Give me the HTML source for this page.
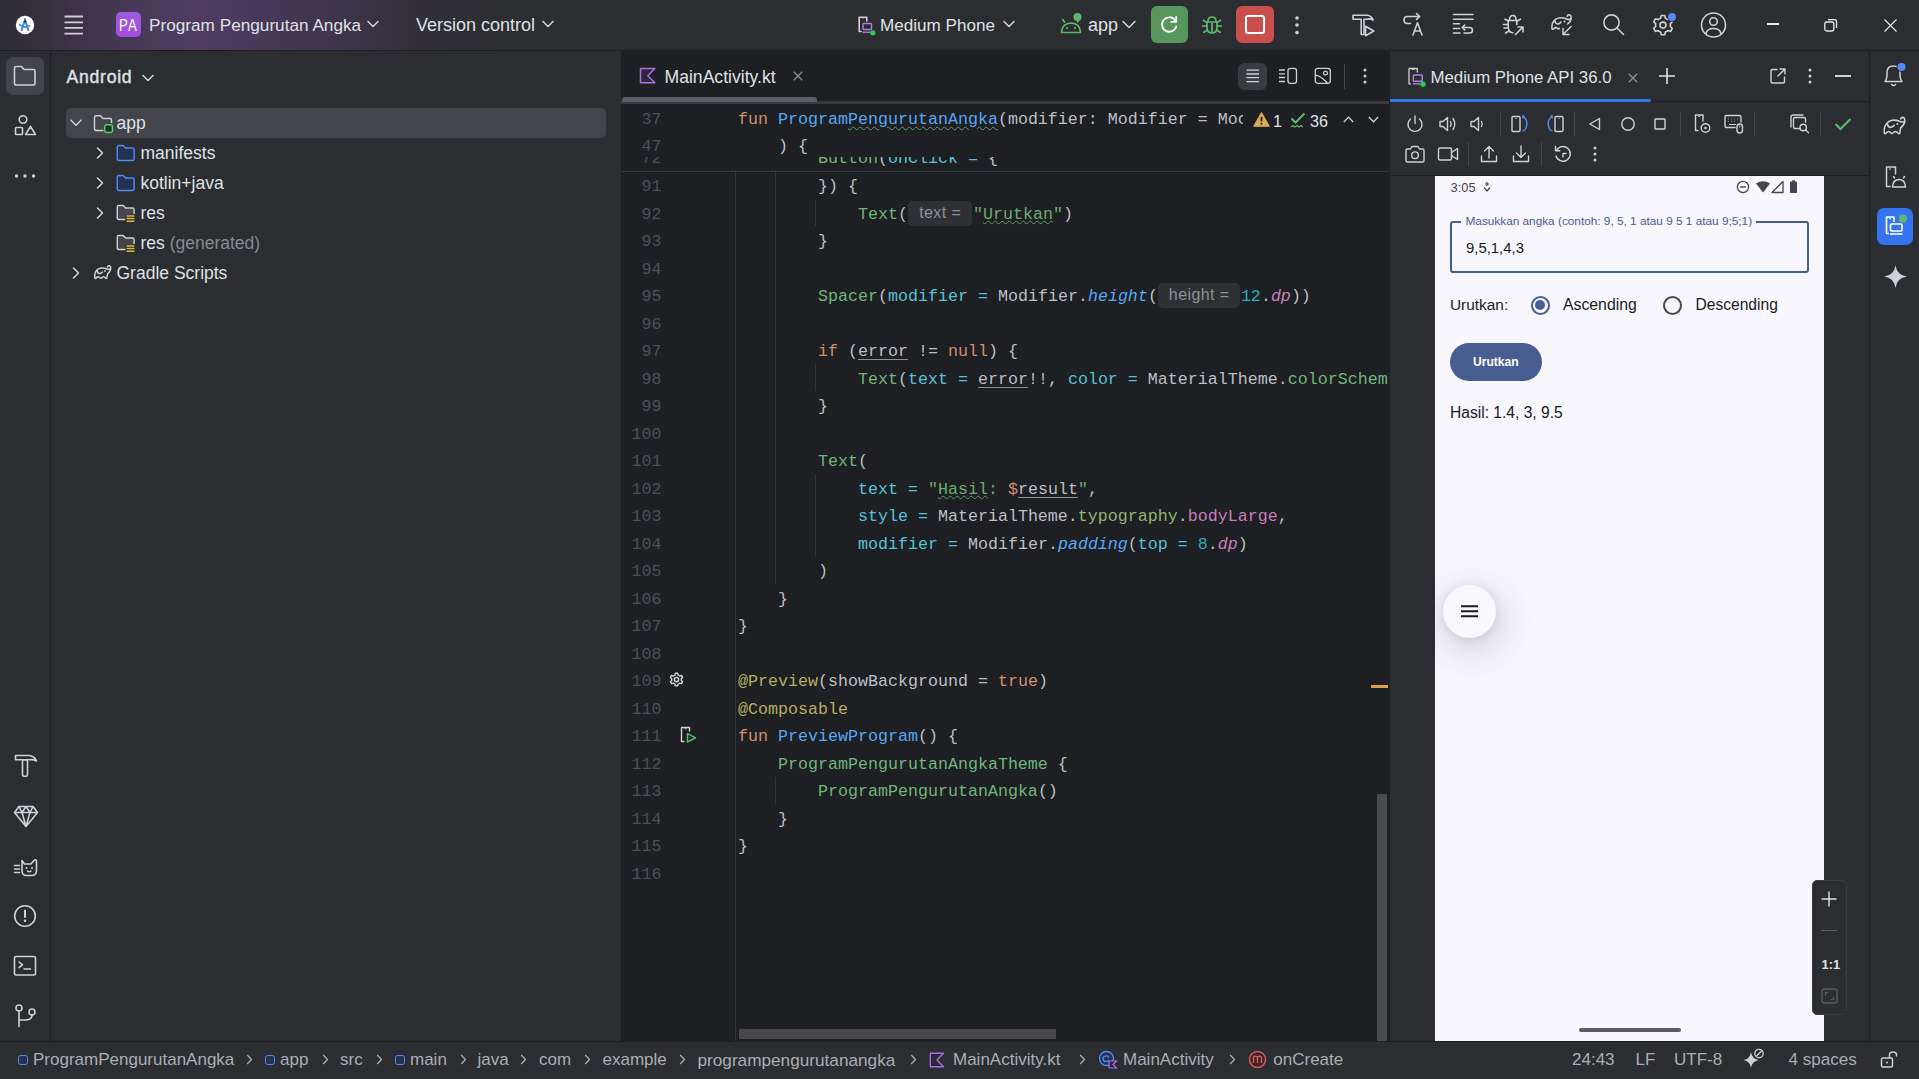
<!DOCTYPE html>
<html><head><meta charset="utf-8">
<style>
*{margin:0;padding:0;box-sizing:border-box}
html,body{width:1919px;height:1079px;overflow:hidden;background:#2B2D30;font-family:"Liberation Sans",sans-serif;color:#DFE1E5}
.a{position:absolute}
svg{position:absolute;overflow:visible}
.ic{fill:none;stroke:#CED0D6;stroke-width:1.6;stroke-linecap:round;stroke-linejoin:round}
#header{left:0;top:0;width:1919px;height:50px;background:#2B2D30}
#hgrad{left:0;top:0;width:620px;height:50px;background:linear-gradient(90deg,#2E2D34 0px,#37313F 50px,#42364F 100px,#4B3B5D 160px,#4D3C60 200px,#48395A 260px,#3F3550 320px,#3A3344 360px,#322F3A 420px,#2D2D32 480px,#2B2D30 540px)}
.hl{position:absolute;height:1px;background:#1E1F22}
.vl{position:absolute;width:1px;background:#1E1F22}
.ht{position:absolute;font-size:17px;color:#DFE1E5;white-space:nowrap;line-height:20px}
.code{font-family:"Liberation Mono",monospace;font-size:16.67px;white-space:pre;line-height:27.5px;color:#BCBEC4}
.ln{position:absolute;font-family:"Liberation Mono",monospace;font-size:16.67px;line-height:27.5px;color:#4B5059;text-align:right;width:60px;left:0}
.hint{display:inline-block;height:25px;line-height:24px;vertical-align:1px;margin:0 1px 0 0.5px;border-radius:5px;background:#2F3034;color:#8C8F94;font-family:"Liberation Sans",sans-serif;font-size:16px;letter-spacing:0.4px;text-align:center;font-style:normal}
.st{position:absolute;font-size:17px;color:#A8ADBD;white-space:nowrap;line-height:20px;top:1049px}
</style></head><body>

<!-- HEADER -->
<div id="header" class="a">
  <div id="hgrad" class="a"></div>
  <!-- AS logo -->
  <svg style="left:15px;top:15px" width="20" height="20" viewBox="0 0 20 20">
    <circle cx="10" cy="10" r="9.2" fill="#FFFFFF"/>
    <path d="M10 5 L6.6 15.2 M10 5 L13.4 15.2" stroke="#3B7BEA" stroke-width="1.9" fill="none" stroke-linecap="round"/>
    <path d="M4.8 9.6 L7.5 11.6 Q10 12.6 12.8 11.2" stroke="#3B7BEA" stroke-width="1.6" fill="none" stroke-linecap="round"/>
    <path d="M10 3.2 V5" stroke="#3B7BEA" stroke-width="1.6"/>
    <circle cx="10" cy="6.3" r="1.2" fill="#2F3540"/>
    <circle cx="14.3" cy="10.8" r="1.1" fill="#4CAF50"/>
  </svg>
  <!-- hamburger -->
  <svg style="left:64px;top:15px" width="20" height="20" viewBox="0 0 20 20">
    <path d="M0.5 1.5H19M0.5 7.3H19M0.5 12.9H19M0.5 18.6H19" stroke="#CED0D6" stroke-width="1.8" fill="none"/>
  </svg>
  <!-- PA badge -->
  <div class="a" style="left:116px;top:12px;width:25px;height:25px;border-radius:5px;background:linear-gradient(200deg,#9A5CE0,#A74CE0);"></div><div class="a" style="left:116px;top:12.5px;width:25px;height:25px;color:#fff;font-size:16.5px;line-height:25px;text-align:center;letter-spacing:1.5px;transform:scaleX(0.8)">PA</div>
  <div class="ht" style="left:149px;top:15px;font-size:17.2px">Program Pengurutan Angka</div>
  <svg style="left:367px;top:20px" width="12" height="8" viewBox="0 0 12 8"><path d="M1 1.5L6 6.5L11 1.5" class="ic" stroke-width="1.5"/></svg>
  <div class="ht" style="left:416px;top:15px;font-size:18px">Version control</div>
  <svg style="left:542px;top:20px" width="12" height="8" viewBox="0 0 12 8"><path d="M1 1.5L6 6.5L11 1.5" class="ic" stroke-width="1.5"/></svg>

  <!-- device selector -->
  <svg style="left:857px;top:16px" width="20" height="20" viewBox="0 0 20 20">
    <path d="M4 15.5H2.2V1.2H9.8V5" class="ic" stroke-width="1.3"/>
    <path d="M5 1.8h2.5" stroke="#CED0D6" stroke-width="1"/>
    <rect x="6" y="7.5" width="8.5" height="6" rx="0.8" fill="none" stroke="#B07FE8" stroke-width="1.4"/>
    <path d="M5.5 16.2H13" stroke="#B07FE8" stroke-width="1.4"/>
    <circle cx="15.8" cy="16.8" r="2.6" fill="#21D14B"/>
  </svg>
  <div class="ht" style="left:880px;top:15.8px;font-size:17.1px">Medium Phone</div>
  <svg style="left:1003px;top:20px" width="12" height="8" viewBox="0 0 12 8"><path d="M1 1.5L6 6.5L11 1.5" class="ic" stroke-width="1.5"/></svg>

  <!-- android app -->
  <svg style="left:1060px;top:12px" width="26" height="24" viewBox="0 0 26 24">
    <path d="M1.5 20.5 Q1.8 11.5 11 11 Q20 11.3 20.5 20.5 Z" fill="none" stroke="#5FB86B" stroke-width="1.7" stroke-linejoin="round"/>
    <path d="M4.5 10L2.8 7.5M17.5 10L19.2 7.5" stroke="#5FB86B" stroke-width="1.6" stroke-linecap="round"/>
    <circle cx="7" cy="16" r="1.1" fill="#5FB86B"/><circle cx="15" cy="16" r="1.1" fill="#5FB86B"/>
    <circle cx="17.5" cy="5" r="4" fill="#5FB86B"/>
  </svg>
  <div class="ht" style="left:1088px;top:14.8px;font-size:18px">app</div>
  <svg style="left:1122px;top:20px" width="14" height="9" viewBox="0 0 14 9"><path d="M1 1.5L7 7.5L13 1.5" class="ic" stroke-width="1.6"/></svg>

  <!-- green rerun -->
  <div class="a" style="left:1151px;top:6px;width:37px;height:37px;border-radius:6px;background:#57965C"></div>
  <svg style="left:1159px;top:14px" width="21" height="21" viewBox="0 0 21 21">
    <path d="M16.8 7.5 A7.2 7.2 0 1 0 17.2 12.5" fill="none" stroke="#fff" stroke-width="1.8" stroke-linecap="round"/>
    <path d="M17.2 2.8V7.8H12.2" fill="none" stroke="#fff" stroke-width="1.8" stroke-linecap="round" stroke-linejoin="round"/>
  </svg>
  <!-- debug bug -->
  <svg style="left:1200px;top:13px" width="24" height="24" viewBox="0 0 24 24">
    <path d="M8 8.5 Q8 4 12 4 Q16 4 16 8.5" fill="none" stroke="#5FB86B" stroke-width="1.7"/>
    <path d="M7 9 H17 V14.5 Q17 20 12 20 Q7 20 7 14.5 Z" fill="none" stroke="#5FB86B" stroke-width="1.7" stroke-linejoin="round"/>
    <path d="M12 9.5V19.5M7 13H2.5M17 13H21.5M7.3 9.5L3.5 7.5M16.7 9.5L20.5 7.5M7.5 17L3.8 19.2M16.5 17L20.2 19.2" stroke="#5FB86B" stroke-width="1.7" stroke-linecap="round"/>
  </svg>
  <!-- red stop -->
  <div class="a" style="left:1236px;top:6px;width:38px;height:37px;border-radius:6px;background:#C94F4F"></div>
  <div class="a" style="left:1245px;top:15px;width:20px;height:19px;border:2px solid #fff;border-radius:3px"></div>
  <!-- kebab -->
  <svg style="left:1293px;top:15px" width="8" height="20" viewBox="0 0 8 20">
    <circle cx="4" cy="3" r="1.8" fill="#CED0D6"/><circle cx="4" cy="10" r="1.8" fill="#CED0D6"/><circle cx="4" cy="17.6" r="1.8" fill="#CED0D6"/>
  </svg>

  <!-- hammer play -->
  <svg style="left:1351px;top:12px" width="26" height="26" viewBox="0 0 26 26">
    <path d="M2 3.2H16 Q20.5 3.5 22.2 8 Q19.5 6.3 16 7.2 H13 V22.5 H10.2 V7.2 H2 Z" class="ic" stroke-width="1.5"/>
    <path d="M14.6 14.2 V23.8 L22.8 19 Z" class="ic" stroke-width="1.5"/>
  </svg>
  <!-- arrow A -->
  <svg style="left:1402px;top:12px" width="25" height="25" viewBox="0 0 25 25">
    <path d="M8.5 11.5 H5.5 Q2 11.5 2 8 Q2 4.5 5.5 4.5 H17.5" class="ic" stroke-width="1.5"/>
    <path d="M14.5 1.5 L17.5 4.5 L14.5 7.5" class="ic" stroke-width="1.5"/>
    <path d="M11 23 L15.5 10.8 L20 23 M12.5 19 H18.5" class="ic" stroke-width="1.5"/>
  </svg>
  <!-- lines undo -->
  <svg style="left:1451px;top:12px" width="25" height="25" viewBox="0 0 25 25">
    <path d="M2.5 2.5H22M2.5 7.2H22M2.5 11.8H8.5M2.5 16.5H8.5M2.5 21H9" class="ic" stroke-width="1.5"/>
    <path d="M13 21 H18.5 Q21.5 21 21.5 18.2 Q21.5 15.5 18.5 15.5 H11.5 M13.8 13 L11.2 15.5 L13.8 18" class="ic" stroke-width="1.5"/>
  </svg>
  <!-- bug arrow -->
  <svg style="left:1501px;top:12px" width="25" height="25" viewBox="0 0 25 25">
    <path d="M8.5 8 Q8.5 3.5 11.8 3.5 Q15 3.5 15 8" class="ic" stroke-width="1.5"/>
    <path d="M15.8 12.5 V8.5 H7.2 V14.5 Q7.2 20.5 11.8 20.8" class="ic" stroke-width="1.5"/>
    <path d="M7 12.5H2.5M7 16H3M7.5 9L4 7.2M16 9L19.5 7.2M8 19L4.5 21" class="ic" stroke-width="1.5"/>
    <path d="M14.5 22.5 L22 15 M17 15 H22 V20" class="ic" stroke-width="1.5"/>
  </svg>
  <!-- elephant arrow -->
  <svg style="left:1550px;top:12px" width="27" height="24" viewBox="0 0 27 24">
    <path d="M2 17 Q1.2 10.5 5.8 7.2 Q10.5 4.5 16.5 7 Q19.5 8.2 21 6.2 Q21.5 3 19 2.8 Q17.5 2.8 17.2 4.3 M21.2 6.2 Q21 9.5 17.5 12 M9.5 16.2 Q8.5 17.8 7.3 16.3 Q5.8 14.8 4 16.6 Q3 17.8 2 17 M4.8 8.8 Q6 12.5 8.2 12 Q10 11.5 11 10" fill="none" stroke="#CED0D6" stroke-width="1.5" stroke-linecap="round" stroke-linejoin="round"/>
    <circle cx="14.5" cy="9.5" r="1" fill="#CED0D6"/>
    <path d="M13 22.5 L21 14.5 M13 16.5 V22.5 H19" fill="none" stroke="#CED0D6" stroke-width="1.5" stroke-linecap="round" stroke-linejoin="round"/>
  </svg>
  <!-- search -->
  <svg style="left:1602px;top:13px" width="24" height="24" viewBox="0 0 24 24">
    <circle cx="9.5" cy="9.5" r="7.6" class="ic" stroke-width="1.6"/>
    <path d="M15 15L21.5 21.5" class="ic" stroke-width="1.6"/>
  </svg>
  <!-- gear -->
  <svg style="left:1651px;top:13px" width="26" height="26" viewBox="0 0 26 26">
    <path d="M10.3 2.5 H13.7 L14.4 5.2 Q15.8 5.7 16.9 6.6 L19.6 5.8 L21.3 8.8 L19.3 10.7 Q19.6 12.1 19.3 13.5 L21.3 15.4 L19.6 18.4 L16.9 17.6 Q15.8 18.5 14.4 19 L13.7 21.7 H10.3 L9.6 19 Q8.2 18.5 7.1 17.6 L4.4 18.4 L2.7 15.4 L4.7 13.5 Q4.4 12.1 4.7 10.7 L2.7 8.8 L4.4 5.8 L7.1 6.6 Q8.2 5.7 9.6 5.2 Z" class="ic" stroke-width="1.5"/>
    <circle cx="12" cy="12.1" r="3" class="ic" stroke-width="1.5"/>
    <circle cx="21" cy="4" r="4.8" fill="#2B2D30"/>
    <circle cx="21" cy="4" r="4" fill="#548AF7"/>
  </svg>
  <!-- account -->
  <svg style="left:1700px;top:11px" width="28" height="28" viewBox="0 0 28 28">
    <circle cx="13.5" cy="14" r="12" class="ic" stroke-width="1.5"/>
    <circle cx="13.5" cy="10.5" r="3.8" class="ic" stroke-width="1.5"/>
    <path d="M6 22.5 Q7 17.5 13.5 17.5 Q20 17.5 21 22.5" class="ic" stroke-width="1.5"/>
  </svg>
  <!-- window controls -->
  <div class="a" style="left:1767px;top:23px;width:12px;height:1.5px;background:#E8E8E8"></div>
  <svg style="left:1824px;top:18px" width="14" height="14" viewBox="0 0 14 14">
    <rect x="0.8" y="4" width="9" height="9" rx="2" fill="none" stroke="#E8E8E8" stroke-width="1.3"/>
    <path d="M4 1.6 H10.5 Q12.5 1.6 12.5 3.6 V10" fill="none" stroke="#E8E8E8" stroke-width="1.3"/>
  </svg>
  <svg style="left:1884px;top:19px" width="13" height="13" viewBox="0 0 13 13">
    <path d="M0.5 0.5L12.5 12.5M12.5 0.5L0.5 12.5" stroke="#E8E8E8" stroke-width="1.2"/>
  </svg>
</div>
<div class="hl" style="left:0;top:50px;width:1919px"></div>

<!-- LEFT STRIP -->
<div class="vl" style="left:50px;top:51px;height:990px"></div>

<!-- PROJECT PANEL -->
<div id="project" class="a" style="left:51px;top:51px;width:570px;height:990px;background:#2B2D30"></div>
<div class="ht" style="left:66.5px;top:66.90px;font-size:17.6px;color:#DFE1E5;-webkit-text-stroke:0.45px #DFE1E5;letter-spacing:0.75px">Android</div>
<svg style="left:142px;top:74px" width="12" height="8" viewBox="0 0 12 8"><path d="M1 1.5L6 6.5L11 1.5" class="ic" stroke-width="1.5"/></svg>
<div class="a" style="left:66px;top:108px;width:540px;height:30px;border-radius:5px;background:#43454A"></div>
<svg style="left:70px;top:119px" width="12" height="8" viewBox="0 0 12 8"><path d="M1 1.2L6 6.2L11 1.2" class="ic" stroke-width="1.4"/></svg>
<svg style="left:93px;top:114px" width="22" height="20" viewBox="0 0 22 20">
 <path d="M10.5 16.5 H3 Q1.5 16.5 1.5 15 V3 Q1.5 1.8 3 1.8 H7.5 L10 4.5 H17 Q18.5 4.5 18.5 6 V9" fill="none" stroke="#CED0D6" stroke-width="1.4"/>
 <rect x="11.8" y="10.8" width="7.6" height="7.6" rx="2" fill="#1F3326" stroke="#4FD16A" stroke-width="1.5"/>
</svg>
<div class="ht" style="left:116.5px;top:112.94px;font-size:17.5px;color:#DFE1E5;">app</div>
<svg style="left:96px;top:147px" width="8" height="12" viewBox="0 0 8 12"><path d="M1.5 1L6.5 6L1.5 11" class="ic" stroke-width="1.4"/></svg>
<svg style="left:116px;top:144px" width="20" height="18" viewBox="0 0 20 18"><path d="M1.3 3 Q1.3 1.5 2.8 1.5 H7.2 L9.6 4 H16.6 Q18.1 4 18.1 5.5 V15 Q18.1 16.5 16.6 16.5 H2.8 Q1.3 16.5 1.3 15 Z" fill="#233252" stroke="#548AF7" stroke-width="1.4"/></svg>
<div class="ht" style="left:140.5px;top:142.94px;font-size:17.5px;color:#DFE1E5;">manifests</div>
<svg style="left:96px;top:177px" width="8" height="12" viewBox="0 0 8 12"><path d="M1.5 1L6.5 6L1.5 11" class="ic" stroke-width="1.4"/></svg>
<svg style="left:116px;top:174px" width="20" height="18" viewBox="0 0 20 18"><path d="M1.3 3 Q1.3 1.5 2.8 1.5 H7.2 L9.6 4 H16.6 Q18.1 4 18.1 5.5 V15 Q18.1 16.5 16.6 16.5 H2.8 Q1.3 16.5 1.3 15 Z" fill="#233252" stroke="#548AF7" stroke-width="1.4"/></svg>
<div class="ht" style="left:140.5px;top:172.94px;font-size:17.5px;color:#DFE1E5;">kotlin+java</div>
<svg style="left:96px;top:207px" width="8" height="12" viewBox="0 0 8 12"><path d="M1.5 1L6.5 6L1.5 11" class="ic" stroke-width="1.4"/></svg>
<svg style="left:116px;top:204px" width="21" height="19" viewBox="0 0 21 19"><path d="M9.5 15.5 H2.8 Q1.3 15.5 1.3 14 V2.8 Q1.3 1.5 2.8 1.5 H7.2 L9.6 4 H16.6 Q18.1 4 18.1 5.5 V10" fill="#43454A" stroke="#CED0D6" stroke-width="1.4"/><rect x="9.6" y="10.6" width="9.4" height="7.4" fill="#2B2D30"/><path d="M10.6 12H18.4M10.6 14.6H18.4M10.6 17.2H18.4" stroke="#E0B643" stroke-width="1.5"/></svg>
<div class="ht" style="left:140.5px;top:202.94px;font-size:17.5px;color:#DFE1E5;">res</div>
<svg style="left:116px;top:234px" width="21" height="19" viewBox="0 0 21 19"><path d="M9.5 15.5 H2.8 Q1.3 15.5 1.3 14 V2.8 Q1.3 1.5 2.8 1.5 H7.2 L9.6 4 H16.6 Q18.1 4 18.1 5.5 V10" fill="#43454A" stroke="#CED0D6" stroke-width="1.4"/><rect x="9.6" y="10.6" width="9.4" height="7.4" fill="#2B2D30"/><path d="M10.6 12H18.4M10.6 14.6H18.4M10.6 17.2H18.4" stroke="#E0B643" stroke-width="1.5"/></svg>
<div class="ht" style="left:140.5px;top:232.94px;font-size:17.5px;color:#DFE1E5;">res <span style="color:#868A91">(generated)</span></div>
<svg style="left:72px;top:267px" width="8" height="12" viewBox="0 0 8 12"><path d="M1.5 1L6.5 6L1.5 11" class="ic" stroke-width="1.4"/></svg>
<svg style="left:93px;top:264px" width="21" height="17" viewBox="0 0 21 17">
 <path d="M1.8 14 Q1 8 5 5.2 Q9 2.8 14 5 Q16.5 6 17.6 4.5 Q18 2 16 1.8 Q14.8 1.8 14.5 3 M17.8 4.5 Q17.5 7.5 14.5 10 L13.8 14.2 Q12.8 15 12 13.5 Q10.5 12 9 13.5 Q8 15 6.5 13.5 Q5 12 3.5 13.8 Q2.5 15 1.8 14 M4 6.5 Q5 10 7 9.5 Q8.5 9 9.5 8" fill="none" stroke="#CED0D6" stroke-width="1.5" stroke-linecap="round" stroke-linejoin="round"/>
 <circle cx="12" cy="7" r="0.9" fill="#CED0D6"/>
</svg>
<div class="ht" style="left:116.5px;top:262.94px;font-size:17.5px;color:#DFE1E5;">Gradle Scripts</div>
<!-- left strip icons -->
<div class="a" style="left:6px;top:57px;width:38px;height:38px;border-radius:7px;background:#43454A"></div>
<svg style="left:13px;top:65px" width="24" height="22" viewBox="0 0 24 22">
  <path d="M1.5 3 Q1.5 1.5 3 1.5 H8.5 L11 4.5 H20.5 Q22 4.5 22 6 V18.5 Q22 20 20.5 20 H3 Q1.5 20 1.5 18.5 Z" class="ic" stroke-width="1.7"/>
</svg>
<svg style="left:14px;top:114px" width="24" height="24" viewBox="0 0 24 24">
  <circle cx="9" cy="5.5" r="3.8" class="ic" stroke-width="1.6"/>
  <rect x="1.5" y="13.5" width="7" height="7" rx="0.8" class="ic" stroke-width="1.6"/>
  <path d="M16.5 12.5 L21.5 20.5 H11.5 Z" class="ic" stroke-width="1.6"/>
</svg>
<svg style="left:14px;top:172px" width="24" height="8" viewBox="0 0 24 8">
  <circle cx="2.5" cy="4" r="1.7" fill="#CED0D6"/><circle cx="11" cy="4" r="1.7" fill="#CED0D6"/><circle cx="19.5" cy="4" r="1.7" fill="#CED0D6"/>
</svg>
<!-- hammer -->
<svg style="left:13px;top:753px" width="26" height="26" viewBox="0 0 26 26">
  <path d="M2.5 2.5 H16 Q21.5 3 23.5 8 Q20 6.2 16.5 6.8 H2.5 Z" class="ic" stroke-width="1.6"/>
  <rect x="9.5" y="6.8" width="5" height="16.5" rx="1.5" class="ic" stroke-width="1.6"/>
</svg>
<!-- gem -->
<svg style="left:13px;top:805px" width="26" height="23" viewBox="0 0 26 23">
  <path d="M6 1.5 H20 L24.5 7.5 L13 21.5 L1.5 7.5 Z M1.5 7.5 H24.5 M6 1.5 L9 7.5 L13 21.5 L17 7.5 L20 1.5 M9 7.5 L13 1.5 L17 7.5" class="ic" stroke-width="1.5"/>
</svg>
<!-- cat -->
<svg style="left:13px;top:856px" width="26" height="22" viewBox="0 0 26 22">
  <path d="M9 4.5 L11.5 8 H18 L21.5 4 Q24 3.5 23.5 6 V14.5 Q23.5 19.5 18.5 19.5 H13.5 Q9 19.5 9 14.5 Z" class="ic" stroke-width="1.6"/>
  <path d="M1.5 9.5 H6.5 M1.5 13 H6.5 M1.5 16.5 H6.5" class="ic" stroke-width="1.6"/>
  <circle cx="13.5" cy="12" r="1" fill="#CED0D6"/><circle cx="19" cy="12" r="1" fill="#CED0D6"/>
  <path d="M14.5 15 Q16.2 16.5 18 15" class="ic" stroke-width="1.3"/>
</svg>
<!-- alert -->
<svg style="left:13px;top:904px" width="24" height="24" viewBox="0 0 24 24">
  <circle cx="12" cy="12" r="10.3" class="ic" stroke-width="1.7"/>
  <path d="M12 6.5 V13" stroke="#CED0D6" stroke-width="2" stroke-linecap="round"/>
  <circle cx="12" cy="16.8" r="1.3" fill="#CED0D6"/>
</svg>
<!-- terminal -->
<svg style="left:13px;top:955px" width="24" height="22" viewBox="0 0 24 22">
  <rect x="1.5" y="1.5" width="21" height="18.5" rx="1.5" class="ic" stroke-width="1.6"/>
  <path d="M6 7 L9.5 9.8 L6 12.6 M11 14 H17.5" class="ic" stroke-width="1.6"/>
</svg>
<!-- git -->
<svg style="left:14px;top:1004px" width="24" height="24" viewBox="0 0 24 24">
  <circle cx="5" cy="4" r="3" class="ic" stroke-width="1.6"/>
  <circle cx="18" cy="8" r="3" class="ic" stroke-width="1.6"/>
  <path d="M5 7 V22.5 M18 11 Q18 16 11 16 H5" class="ic" stroke-width="1.6"/>
</svg>

<!-- EDITOR -->
<!--EDSTART-->
<div id="editor" class="a" style="left:621px;top:51px;width:768px;height:990px;background:#1E1F22;overflow:hidden"></div>
<svg style="left:639px;top:67px" width="18" height="18" viewBox="0 0 18 18">
 <path d="M1.5 1.5 H15.8 L8.8 8.8 L15.8 15.8 H1.5 Z" fill="#2E2638" stroke="#A571E6" stroke-width="1.5" stroke-linejoin="round"/>
</svg>
<div class="ht" style="left:664.5px;top:67px;font-size:17.6px;color:#DFE1E5">MainActivity.kt</div>
<svg style="left:793px;top:71px" width="10" height="10" viewBox="0 0 10 10"><path d="M0.8 0.8L9.2 9.2M9.2 0.8L0.8 9.2" stroke="#8C8F94" stroke-width="1.3"/></svg>
<div class="a" style="left:621px;top:101px;width:768px;height:3px;background:#393B40"></div>
<div class="a" style="left:622px;top:97px;width:195px;height:5px;border-radius:3px 3px 0 0;background:#5A5D63"></div>
<div class="a" style="left:1238px;top:62.5px;width:29px;height:27px;border-radius:6px;background:#393B40"></div>
<svg style="left:1246px;top:69px" width="14" height="14" viewBox="0 0 14 14"><path d="M0.5 1.2H13M0.5 5H13M0.5 8.7H13M0.5 12.6H13" stroke="#CED0D6" stroke-width="1.3"/></svg>
<svg style="left:1278px;top:67px" width="20" height="18" viewBox="0 0 20 18"><path d="M1 3H7M1 6.8H7M1 10.5H7M1 14.5H7" stroke="#CED0D6" stroke-width="1.3"/><rect x="10" y="1.3" width="8.5" height="15" rx="2.3" fill="none" stroke="#CED0D6" stroke-width="1.3"/></svg>
<svg style="left:1314px;top:67px" width="18" height="18" viewBox="0 0 18 18"><rect x="1.3" y="1.3" width="15" height="15" rx="2.5" fill="none" stroke="#CED0D6" stroke-width="1.3"/><circle cx="11.5" cy="6" r="1.9" fill="none" stroke="#CED0D6" stroke-width="1.2"/><path d="M1.5 8.5 Q5 7.5 13.5 16" fill="none" stroke="#CED0D6" stroke-width="1.3"/></svg>
<div class="a" style="left:1344px;top:64px;width:1px;height:25px;background:#43454A"></div>
<svg style="left:1361px;top:67px" width="8" height="18" viewBox="0 0 8 18"><circle cx="4" cy="3" r="1.5" fill="#CED0D6"/><circle cx="4" cy="9" r="1.5" fill="#CED0D6"/><circle cx="4" cy="15" r="1.5" fill="#CED0D6"/></svg>
<div class="ln" style="left:601.5px;top:173.00px">91</div>
<div class="a code" style="left:738px;top:173.00px">        }) {</div>
<div class="ln" style="left:601.5px;top:200.50px">92</div>
<div class="a code" style="left:738px;top:200.50px">            <span style="color:#6FB57D;">Text</span>(<span class="hint" style="width:63.5px">text =</span><span style="color:#6AAB73;">"</span><span style="color:#6AAB73;text-decoration:underline wavy #5E9A68;text-underline-offset:1px;text-decoration-thickness:1px;">Urutkan</span><span style="color:#6AAB73;">"</span>)</div>
<div class="ln" style="left:601.5px;top:228.00px">93</div>
<div class="a code" style="left:738px;top:228.00px">        }</div>
<div class="ln" style="left:601.5px;top:255.50px">94</div>
<div class="ln" style="left:601.5px;top:283.00px">95</div>
<div class="a code" style="left:738px;top:283.00px">        <span style="color:#6FB57D;">Spacer</span>(<span style="color:#56C1D6;">modifier =</span> Modifier.<span style="color:#56A8F5;font-style:italic;">height</span>(<span class="hint" style="width:81.5px">height =</span><span style="color:#2AACB8;">12</span>.<span style="color:#C77DBB;font-style:italic;">dp</span>))</div>
<div class="ln" style="left:601.5px;top:310.50px">96</div>
<div class="ln" style="left:601.5px;top:338.00px">97</div>
<div class="a code" style="left:738px;top:338.00px">        <span style="color:#CF8E6D;">if</span> (<span style="text-decoration:underline;text-underline-offset:3px;text-decoration-thickness:1px;text-decoration-color:#8C8F94">error</span> != <span style="color:#CF8E6D;">null</span>) {</div>
<div class="ln" style="left:601.5px;top:365.50px">98</div>
<div class="a code" style="left:738px;top:365.50px">            <span style="color:#6FB57D;">Text</span>(<span style="color:#56C1D6;">text =</span> <span style="text-decoration:underline;text-underline-offset:3px;text-decoration-thickness:1px;text-decoration-color:#8C8F94">error</span>!!, <span style="color:#56C1D6;">color =</span> MaterialTheme.<span style="color:#6FB57D">colorSchem</span></div>
<div class="ln" style="left:601.5px;top:393.00px">99</div>
<div class="a code" style="left:738px;top:393.00px">        }</div>
<div class="ln" style="left:601.5px;top:420.50px">100</div>
<div class="ln" style="left:601.5px;top:448.00px">101</div>
<div class="a code" style="left:738px;top:448.00px">        <span style="color:#6FB57D;">Text</span>(</div>
<div class="ln" style="left:601.5px;top:475.50px">102</div>
<div class="a code" style="left:738px;top:475.50px">            <span style="color:#56C1D6;">text =</span> <span style="color:#6AAB73;">"</span><span style="color:#6AAB73;text-decoration:underline wavy #5E9A68;text-underline-offset:1px;text-decoration-thickness:1px;">Hasil</span><span style="color:#6AAB73;">: </span><span style="color:#CF8E6D;">$</span><span style="text-decoration:underline;text-underline-offset:3px;text-decoration-thickness:1px;text-decoration-color:#8C8F94">result</span><span style="color:#6AAB73;">"</span>,</div>
<div class="ln" style="left:601.5px;top:503.00px">103</div>
<div class="a code" style="left:738px;top:503.00px">            <span style="color:#56C1D6;">style =</span> MaterialTheme.<span style="color:#8FB573">typography</span>.<span style="color:#C77DBB">bodyLarge</span>,</div>
<div class="ln" style="left:601.5px;top:530.50px">104</div>
<div class="a code" style="left:738px;top:530.50px">            <span style="color:#56C1D6;">modifier =</span> Modifier.<span style="color:#56A8F5;font-style:italic;">padding</span>(<span style="color:#56C1D6;">top =</span> <span style="color:#2AACB8;">8</span>.<span style="color:#C77DBB;font-style:italic;">dp</span>)</div>
<div class="ln" style="left:601.5px;top:558.00px">105</div>
<div class="a code" style="left:738px;top:558.00px">        )</div>
<div class="ln" style="left:601.5px;top:585.50px">106</div>
<div class="a code" style="left:738px;top:585.50px">    }</div>
<div class="ln" style="left:601.5px;top:613.00px">107</div>
<div class="a code" style="left:738px;top:613.00px">}</div>
<div class="ln" style="left:601.5px;top:640.50px">108</div>
<div class="ln" style="left:601.5px;top:668.00px">109</div>
<div class="a code" style="left:738px;top:668.00px"><span style="color:#B3AE60;">@Preview</span>(showBackground = <span style="color:#CF8E6D;">true</span>)</div>
<div class="ln" style="left:601.5px;top:695.50px">110</div>
<div class="a code" style="left:738px;top:695.50px"><span style="color:#B3AE60;">@Composable</span></div>
<div class="ln" style="left:601.5px;top:723.00px">111</div>
<div class="a code" style="left:738px;top:723.00px"><span style="color:#CF8E6D;">fun </span><span style="color:#56A8F5;">PreviewProgram</span>() {</div>
<div class="ln" style="left:601.5px;top:750.50px">112</div>
<div class="a code" style="left:738px;top:750.50px">    <span style="color:#6FB57D;">ProgramPengurutanAngkaTheme</span> {</div>
<div class="ln" style="left:601.5px;top:778.00px">113</div>
<div class="a code" style="left:738px;top:778.00px">        <span style="color:#6FB57D;">ProgramPengurutanAngka</span>()</div>
<div class="ln" style="left:601.5px;top:805.50px">114</div>
<div class="a code" style="left:738px;top:805.50px">    }</div>
<div class="ln" style="left:601.5px;top:833.00px">115</div>
<div class="a code" style="left:738px;top:833.00px">}</div>
<div class="ln" style="left:601.5px;top:860.50px">116</div>
<div class="a" style="left:735px;top:172px;width:1px;height:869px;background:#313338"></div>
<div class="a" style="left:775px;top:172px;width:1px;height:412px;background:#313338"></div>
<div class="a" style="left:775px;top:777px;width:1px;height:27px;background:#313338"></div>
<div class="a" style="left:815px;top:200px;width:1px;height:26px;background:#313338"></div>
<div class="a" style="left:815px;top:364px;width:1px;height:27px;background:#313338"></div>
<div class="a" style="left:815px;top:474px;width:1px;height:82px;background:#313338"></div>
<svg style="left:668px;top:671px" width="17" height="17" viewBox="0 0 26 26">
 <path d="M10.3 2.5 H13.7 L14.4 5.2 Q15.8 5.7 16.9 6.6 L19.6 5.8 L21.3 8.8 L19.3 10.7 Q19.6 12.1 19.3 13.5 L21.3 15.4 L19.6 18.4 L16.9 17.6 Q15.8 18.5 14.4 19 L13.7 21.7 H10.3 L9.6 19 Q8.2 18.5 7.1 17.6 L4.4 18.4 L2.7 15.4 L4.7 13.5 Q4.4 12.1 4.7 10.7 L2.7 8.8 L4.4 5.8 L7.1 6.6 Q8.2 5.7 9.6 5.2 Z" fill="none" stroke="#CED0D6" stroke-width="2.2" stroke-linejoin="round" transform="translate(1 1)"/>
 <circle cx="13" cy="13.1" r="3.3" fill="none" stroke="#CED0D6" stroke-width="2.2"/>
</svg>
<svg style="left:680px;top:726px" width="18" height="18" viewBox="0 0 18 18">
 <path d="M4.5 15.5 H1.5 V1.5 H9.5 V5.5" fill="none" stroke="#CED0D6" stroke-width="1.4" stroke-linejoin="round"/>
 <path d="M4.5 2.8H6.5" stroke="#CED0D6" stroke-width="1"/>
 <path d="M7.5 7.5 L15.5 11.8 L7.5 16.2 Z" fill="#1F3326" stroke="#5FB86B" stroke-width="1.4" stroke-linejoin="round"/>
</svg>
<div class="a" style="left:622px;top:104px;width:767px;height:68px;background:#1E1F22;overflow:hidden">
<div class="ln" style="left:-20.5px;top:1.60px">37</div>
<div class="a code" style="left:116px;top:1.6px"><span style="color:#CF8E6D">fun </span><span style="color:#56A8F5">Program<span style="text-decoration:underline wavy #5E9A68;text-underline-offset:2px;text-decoration-thickness:1px">PengurutanAngka</span></span>(modifier: Modifier = Moc</div>
<div class="ln" style="left:-20.5px;top:28.60px">47</div>
<div class="a code" style="left:116px;top:28.6px">    ) {</div>
<div class="a" style="left:0;top:52.5px;width:767px;height:14.5px;overflow:hidden">
<div class="ln" style="left:-20.5px;top:-11.5px">72</div>
<div class="a code" style="left:116px;top:-11.5px">        <span style="color:#6FB57D">Button</span>(<span style="color:#56C1D6">onClick =</span> {</div>
</div>
<div class="a" style="left:0;top:67px;width:767px;height:1px;background:#393B40"></div>
<div class="a" style="left:621px;top:0;width:146px;height:27px;background:#1E1F22"></div>
<svg style="left:631px;top:8px" width="17" height="15" viewBox="0 0 17 15"><path d="M8.5 0.8 L16.2 14.2 H0.8 Z" fill="#D9A94F" stroke="#D9A94F" stroke-width="1.2" stroke-linejoin="round"/><path d="M8.5 5V9.5" stroke="#1E1F22" stroke-width="1.8"/><circle cx="8.5" cy="11.8" r="1" fill="#1E1F22"/></svg>
<div class="ht" style="left:651px;top:6.5px;font-size:16.2px;color:#DFE1E5">1</div>
<svg style="left:668px;top:8px" width="16" height="17" viewBox="0 0 16 17"><path d="M1.5 6.5 L5.5 10.5 L14.5 1.5" fill="none" stroke="#5FB86B" stroke-width="2"/><path d="M1 15 L3 13.5 L5 15 L7 13.5 L9 15 L11 13.5 L13 15" fill="none" stroke="#5FB86B" stroke-width="1.1"/></svg>
<div class="ht" style="left:688px;top:6.5px;font-size:16.2px;color:#DFE1E5">36</div>
<svg style="left:721px;top:12px" width="11" height="7" viewBox="0 0 11 7"><path d="M0.8 6L5.5 1.2L10.2 6" fill="none" stroke="#CED0D6" stroke-width="1.3"/></svg>
<svg style="left:746px;top:12px" width="11" height="7" viewBox="0 0 11 7"><path d="M0.8 1L5.5 5.8L10.2 1" fill="none" stroke="#CED0D6" stroke-width="1.3"/></svg>
</div>
<div class="a" style="left:1371px;top:685px;width:17px;height:3px;background:#D9A343"></div>
<div class="a" style="left:1376px;top:793px;width:12px;height:248px;background:#1E1F22"></div>
<div class="a" style="left:1377px;top:794px;width:10px;height:247px;background:#4A4B4E"></div>
<div class="a" style="left:739px;top:1029px;width:317px;height:10px;background:#48484B"></div>
<!--EDEND-->
<div class="vl" style="left:1389px;top:51px;height:990px"></div>

<!-- DEVICES -->
<!--DEVSTART-->
<div id="devices" class="a" style="left:1390px;top:51px;width:479px;height:990px;background:#2B2D30;overflow:hidden"></div>
<svg style="left:1407px;top:67px" width="20" height="20" viewBox="0 0 20 20">
 <path d="M4 16.8H2V1.5H10.3V5.5" fill="none" stroke="#CED0D6" stroke-width="1.3" stroke-linejoin="round"/>
 <path d="M5 2.5h2.5" stroke="#CED0D6" stroke-width="1"/>
 <rect x="6.3" y="8" width="9" height="6.3" rx="0.8" fill="none" stroke="#B07FE8" stroke-width="1.4"/>
 <path d="M5.8 16.8H13.5" stroke="#B07FE8" stroke-width="1.4"/>
 <circle cx="16" cy="17.2" r="2.6" fill="#21D14B"/>
</svg>
<div class="ht" style="left:1430.5px;top:68.48px;font-size:16.8px;color:#DFE1E5;">Medium Phone API 36.0</div>
<svg style="left:1628px;top:73px" width="10" height="10" viewBox="0 0 10 10"><path d="M0.8 0.8L9.2 9.2M9.2 0.8L0.8 9.2" stroke="#8C8F94" stroke-width="1.3"/></svg>
<svg style="left:1658px;top:67px" width="18" height="18" viewBox="0 0 18 18"><path d="M9 1V17M1 9H17" stroke="#DFE1E5" stroke-width="1.6"/></svg>
<svg style="left:1769px;top:67px" width="18" height="18" viewBox="0 0 18 18"><path d="M8 2.5H3.5Q2 2.5 2 4V14.5Q2 16 3.5 16H14Q15.5 16 15.5 14.5V10" fill="none" stroke="#CED0D6" stroke-width="1.4" stroke-linecap="round" stroke-linejoin="round"/><path d="M9 9L16 2M11 2H16V7" fill="none" stroke="#CED0D6" stroke-width="1.4" stroke-linecap="round" stroke-linejoin="round"/></svg>
<svg style="left:1806px;top:67px" width="8" height="18" viewBox="0 0 8 18"><circle cx="4" cy="3" r="1.5" fill="#CED0D6"/><circle cx="4" cy="9" r="1.5" fill="#CED0D6"/><circle cx="4" cy="15" r="1.5" fill="#CED0D6"/></svg>
<div class="a" style="left:1835px;top:75px;width:16px;height:1.6px;background:#CED0D6"></div>
<div class="a" style="left:1390px;top:101px;width:479px;height:1px;background:#1E1F22"></div>
<div class="a" style="left:1390px;top:99px;width:261px;height:3px;border-radius:0 2px 2px 0;background:#3574F0"></div>
<svg style="left:1405.0px;top:114.0px" width="20" height="20" viewBox="0 0 20 20"><path d="M10 2V9.5" fill="none" stroke="#CED0D6" stroke-width="1.4" stroke-linecap="round" stroke-linejoin="round"/><path d="M5.5 5 A7 7 0 1 0 14.5 5" fill="none" stroke="#CED0D6" stroke-width="1.4" stroke-linecap="round" stroke-linejoin="round"/></svg>
<svg style="left:1437.5px;top:114.0px" width="20" height="20" viewBox="0 0 20 20"><path d="M2 7.5H5L9.5 3.5V16.5L5 12.5H2Z" fill="none" stroke="#CED0D6" stroke-width="1.4" stroke-linecap="round" stroke-linejoin="round"/><path d="M12.5 7.5Q14 10 12.5 12.5M15 4.5Q18.5 10 15 15.5" fill="none" stroke="#CED0D6" stroke-width="1.4" stroke-linecap="round" stroke-linejoin="round"/></svg>
<svg style="left:1469.0px;top:114.0px" width="18" height="20" viewBox="0 0 18 20"><path d="M2 7.5H5L9.5 3.5V16.5L5 12.5H2Z" fill="none" stroke="#CED0D6" stroke-width="1.4" stroke-linecap="round" stroke-linejoin="round"/><path d="M12.5 7.5Q14 10 12.5 12.5" fill="none" stroke="#CED0D6" stroke-width="1.4" stroke-linecap="round" stroke-linejoin="round"/></svg>
<div class="a" style="left:1500px;top:112px;width:1px;height:24px;background:#43454A"></div>
<svg style="left:1510.0px;top:114.0px" width="22" height="20" viewBox="0 0 22 20"><rect x="2" y="2.5" width="8" height="15" rx="1" fill="none" stroke="#CED0D6" stroke-width="1.4" stroke-linecap="round" stroke-linejoin="round"/><path d="M5.5 4.5h1" stroke="#CED0D6" stroke-width="1"/><path d="M13 2.5Q18 6 16.5 12.5Q15.8 15.5 13 17" fill="none" stroke="#548AF7" stroke-width="1.4" stroke-linecap="round"/><path d="M12.5 1L14 2.7L12 4.3" fill="none" stroke="#548AF7" stroke-width="1.3"/></svg>
<svg style="left:1543.0px;top:114.0px" width="22" height="20" viewBox="0 0 22 20"><rect x="12" y="2.5" width="8" height="15" rx="1" fill="none" stroke="#CED0D6" stroke-width="1.4" stroke-linecap="round" stroke-linejoin="round"/><path d="M15.5 4.5h1" stroke="#CED0D6" stroke-width="1"/><path d="M9 2.5Q4 6 5.5 12.5Q6.2 15.5 9 17" fill="none" stroke="#548AF7" stroke-width="1.4" stroke-linecap="round"/><path d="M9.5 1L8 2.7L10 4.3" fill="none" stroke="#548AF7" stroke-width="1.3"/></svg>
<div class="a" style="left:1574px;top:112px;width:1px;height:24px;background:#43454A"></div>
<svg style="left:1588.0px;top:117.0px" width="14" height="14" viewBox="0 0 14 14"><path d="M11.5 1.5V12.5L1.8 7Z" fill="none" stroke="#CED0D6" stroke-width="1.4" stroke-linecap="round" stroke-linejoin="round"/></svg>
<svg style="left:1620.0px;top:116.0px" width="16" height="16" viewBox="0 0 16 16"><circle cx="8" cy="8" r="6.2" fill="none" stroke="#CED0D6" stroke-width="1.4" stroke-linecap="round" stroke-linejoin="round"/></svg>
<svg style="left:1653.0px;top:117.0px" width="14" height="14" viewBox="0 0 14 14"><rect x="2" y="2" width="10" height="10" rx="0.5" fill="none" stroke="#CED0D6" stroke-width="1.4" stroke-linecap="round" stroke-linejoin="round"/></svg>
<div class="a" style="left:1680px;top:112px;width:1px;height:24px;background:#43454A"></div>
<svg style="left:1693.0px;top:113.0px" width="20" height="22" viewBox="0 0 20 22"><path d="M5 17.5H2.5V2H10V8" fill="none" stroke="#CED0D6" stroke-width="1.4" stroke-linecap="round" stroke-linejoin="round"/><path d="M5.5 3.5h1.5" stroke="#CED0D6" stroke-width="1"/><circle cx="12.5" cy="15" r="4.3" fill="none" stroke="#CED0D6" stroke-width="1.4" stroke-linecap="round" stroke-linejoin="round"/><circle cx="12.5" cy="15" r="1.3" fill="#CED0D6"/></svg>
<svg style="left:1723.0px;top:113.0px" width="22" height="22" viewBox="0 0 22 22"><path d="M12 14.5H3.5Q2 14.5 2 13V4Q2 2.5 3.5 2.5H16.5Q18 2.5 18 4V9" fill="none" stroke="#CED0D6" stroke-width="1.4" stroke-linecap="round" stroke-linejoin="round"/><path d="M5.5 6H6M8.5 6H9M11.5 6H12M14.5 6H15M5.5 8.5H6M8.5 8.5H9M11.5 8.5H12M6 11.5H13" stroke="#CED0D6" stroke-width="1.1"/><rect x="14" y="11" width="5.5" height="9" rx="2.7" fill="none" stroke="#CED0D6" stroke-width="1.4" stroke-linecap="round" stroke-linejoin="round"/><path d="M16.75 12.5V14.5" stroke="#CED0D6" stroke-width="1"/></svg>
<div class="a" style="left:1754px;top:112px;width:1px;height:24px;background:#43454A"></div>
<svg style="left:1789.0px;top:113.0px" width="22" height="22" viewBox="0 0 22 22"><path d="M2 14V4Q2 2 4 2H14" fill="none" stroke="#CED0D6" stroke-width="1.4" stroke-linecap="round" stroke-linejoin="round"/><path d="M11 15.5H6Q4.5 15.5 4.5 14V6Q4.5 4.5 6 4.5H15Q16.5 4.5 16.5 6V9" fill="none" stroke="#CED0D6" stroke-width="1.4" stroke-linecap="round" stroke-linejoin="round"/><circle cx="14.2" cy="14.5" r="3.2" fill="none" stroke="#CED0D6" stroke-width="1.4" stroke-linecap="round" stroke-linejoin="round"/><path d="M16.5 16.8L19.5 19.8" fill="none" stroke="#CED0D6" stroke-width="1.4" stroke-linecap="round" stroke-linejoin="round"/></svg>
<div class="a" style="left:1820px;top:112px;width:1px;height:24px;background:#43454A"></div>
<svg style="left:1834.0px;top:117.0px" width="18" height="14" viewBox="0 0 18 14"><path d="M1.5 7L6.5 12L16.5 2" fill="none" stroke="#5FB86B" stroke-width="2.2"/></svg>
<svg style="left:1404.0px;top:144.0px" width="22" height="20" viewBox="0 0 22 20"><path d="M2 6.5Q2 5 3.5 5H6.5L8 2.5H14L15.5 5H18.5Q20 5 20 6.5V16.5Q20 18 18.5 18H3.5Q2 18 2 16.5Z" fill="none" stroke="#CED0D6" stroke-width="1.4" stroke-linecap="round" stroke-linejoin="round"/><circle cx="11" cy="11.2" r="3.3" fill="none" stroke="#CED0D6" stroke-width="1.4" stroke-linecap="round" stroke-linejoin="round"/><path d="M17 7.5h.3" stroke="#CED0D6" stroke-width="1"/></svg>
<svg style="left:1437.0px;top:145.0px" width="22" height="18" viewBox="0 0 22 18"><rect x="1.5" y="3" width="13" height="12" rx="1.5" fill="none" stroke="#CED0D6" stroke-width="1.4" stroke-linecap="round" stroke-linejoin="round"/><path d="M14.5 7.5L20.5 3.5V14.5L14.5 10.5" fill="none" stroke="#CED0D6" stroke-width="1.4" stroke-linecap="round" stroke-linejoin="round"/></svg>
<div class="a" style="left:1468px;top:142px;width:1px;height:24px;background:#43454A"></div>
<svg style="left:1480.0px;top:144.0px" width="18" height="20" viewBox="0 0 18 20"><path d="M9 14V2.5M4.5 7L9 2.5L13.5 7M1.5 12V17.5H16.5V12" fill="none" stroke="#CED0D6" stroke-width="1.4" stroke-linecap="round" stroke-linejoin="round"/></svg>
<svg style="left:1512.0px;top:144.0px" width="18" height="20" viewBox="0 0 18 20"><path d="M9 2V13.5M4.5 9L9 13.5L13.5 9M1.5 12V17.5H16.5V12" fill="none" stroke="#CED0D6" stroke-width="1.4" stroke-linecap="round" stroke-linejoin="round"/></svg>
<div class="a" style="left:1541px;top:142px;width:1px;height:24px;background:#43454A"></div>
<svg style="left:1553.0px;top:144.0px" width="20" height="20" viewBox="0 0 20 20"><path d="M3.5 6.5A7.3 7.3 0 1 1 3 12" fill="none" stroke="#CED0D6" stroke-width="1.4" stroke-linecap="round" stroke-linejoin="round"/><path d="M2.5 2.5V6.8H6.8" fill="none" stroke="#CED0D6" stroke-width="1.4" stroke-linecap="round" stroke-linejoin="round"/><path d="M10 13V9.5H13" fill="none" stroke="#CED0D6" stroke-width="1.4" stroke-linecap="round" stroke-linejoin="round"/></svg>
<svg style="left:1591.0px;top:145.0px" width="8" height="18" viewBox="0 0 8 18"><circle cx="4" cy="3" r="1.5" fill="#CED0D6"/><circle cx="4" cy="9" r="1.5" fill="#CED0D6"/><circle cx="4" cy="15" r="1.5" fill="#CED0D6"/></svg>
<div class="a" style="left:1390px;top:175px;width:479px;height:1px;background:#1E1F22"></div>
<div class="a" style="left:1435px;top:176px;width:389px;height:865px;background:#F8F7FE;overflow:hidden">
<div class="ht" style="left:15.5px;top:1.53px;font-size:12.9px;color:#49454F;font-family:'Liberation Sans',sans-serif;">3:05</div>
<svg style="left:47px;top:5px" width="10" height="12" viewBox="0 0 10 12"><path d="M5 1V5M3 3H7M2 6.5L5 10L8 6.5" fill="none" stroke="#49454F" stroke-width="1.2" stroke-linejoin="round"/></svg>
<svg style="left:301px;top:4px" width="62" height="14" viewBox="0 0 62 14"><circle cx="7" cy="7" r="5.6" fill="none" stroke="#49454F" stroke-width="1.3"/><path d="M4 7H10" stroke="#49454F" stroke-width="1.4"/><path d="M20 3.5 Q27 -1 34 3.5 L27 12.5Z" fill="#49454F"/><path d="M47 1.5V12.5H36Z" fill="none" stroke="#49454F" stroke-width="1.3" stroke-linejoin="round"/><rect x="54" y="1.5" width="7" height="11.5" rx="0.8" fill="#49454F"/><rect x="56" y="0.3" width="3" height="1.5" fill="#49454F"/></svg>
<div class="a" style="left:15px;top:45px;width:358.5px;height:52px;border:2px solid #485D92;border-radius:3px"></div>
<div class="a" style="left:26px;top:43px;width:295px;height:6px;background:#F8F7FE"></div>
<div class="ht" style="left:30.5px;top:34.91px;font-size:11.8px;color:#485D92;font-family:'Liberation Sans',sans-serif;">Masukkan angka (contoh: 9, 5, 1 atau 9 5 1 atau 9;5;1)</div>
<div class="ht" style="left:31px;top:61.84px;font-size:14.9px;color:#1A1B20;font-family:'Liberation Sans',sans-serif;">9,5,1,4,3</div>
<div class="ht" style="left:15px;top:119.16px;font-size:15.4px;color:#1A1B20;font-family:'Liberation Sans',sans-serif;">Urutkan:</div>
<div class="a" style="left:95.70000000000005px;top:119.5px;width:19px;height:19px;border:2px solid #485D92;border-radius:50%"></div>
<div class="a" style="left:100.20000000000005px;top:124px;width:10px;height:10px;background:#485D92;border-radius:50%"></div>
<div class="ht" style="left:128px;top:119.03px;font-size:15.8px;color:#1A1B20;font-family:'Liberation Sans',sans-serif;">Ascending</div>
<div class="a" style="left:228.0px;top:119.5px;width:19px;height:19px;border:2px solid #45464F;border-radius:50%"></div>
<div class="ht" style="left:260.5px;top:119.09px;font-size:15.6px;color:#1A1B20;font-family:'Liberation Sans',sans-serif;">Descending</div>
<div class="a" style="left:15px;top:167px;width:92px;height:38px;border-radius:19px;background:#485D92"></div>
<div class="ht" style="left:38px;top:176.31px;font-size:12.1px;color:#FFFFFF;font-family:'Liberation Sans',sans-serif;font-weight:bold">Urutkan</div>
<div class="ht" style="left:15px;top:226.59px;font-size:15.6px;color:#1A1B20;font-family:'Liberation Sans',sans-serif;">Hasil: 1.4, 3, 9.5</div>
<div class="a" style="left:8.0px;top:409.0px;width:53px;height:53px;border-radius:50%;background:#F9F8FD;box-shadow:3px 10px 40px rgba(50,40,70,0.24),0 2px 12px rgba(0,0,0,0.10)"></div>
<svg style="left:26px;top:429px" width="17" height="13" viewBox="0 0 17 13"><path d="M0 1.3H17M0 6.3H17M0 11.3H17" stroke="#1A1B20" stroke-width="2"/></svg>
<div class="a" style="left:143.5px;top:851.5px;width:102px;height:4px;border-radius:2px;background:#5C5C60"></div>
</div>
<div class="a" style="left:1812px;top:880px;width:35px;height:135px;border-radius:5px;background:#2B2D30;border:1px solid #393B40"></div>
<svg style="left:1821px;top:891px" width="16" height="16" viewBox="0 0 16 16"><path d="M8 0.5V15.5M0.5 8H15.5" stroke="#DFE1E5" stroke-width="1.4"/></svg>
<div class="a" style="left:1821px;top:930px;width:16px;height:1.4px;background:#5A5D63"></div>
<div class="ht" style="left:1821.5px;top:954.50px;font-size:13px;color:#DFE1E5;font-weight:bold">1:1</div>
<svg style="left:1821px;top:988px" width="17" height="16" viewBox="0 0 17 16"><rect x="1" y="1" width="15" height="14" rx="2" fill="none" stroke="#5A5D63" stroke-width="1.3"/><path d="M4.5 7.5V4.5H7.5M12.5 8.5V11.5H9.5" fill="none" stroke="#5A5D63" stroke-width="1.2"/></svg>
<!--DEVEND-->
<div class="vl" style="left:1869px;top:51px;height:990px"></div>

<!-- STATUS -->
<div class="hl" style="left:0;top:1041px;width:1919px"></div>
<!--STSTART-->
<svg style="left:1882px;top:62px" width="26" height="28" viewBox="0 0 26 28"><path d="M3 19.5 Q5 17.5 5 13 V10.5 Q5 4 11.5 4 Q18 4 18 10.5 V13 Q18 17.5 20 19.5 Z" fill="none" stroke="#CED0D6" stroke-width="1.5" stroke-linecap="round" stroke-linejoin="round"/><path d="M9.5 22.5 Q11.5 24.5 13.5 22.5" fill="none" stroke="#CED0D6" stroke-width="1.5" stroke-linecap="round" stroke-linejoin="round"/><circle cx="19.5" cy="5" r="5" fill="#2B2D30"/><circle cx="19.5" cy="5" r="4" fill="#548AF7"/></svg>
<svg style="left:1882px;top:115px" width="27" height="22" viewBox="0 0 21 17"><path d="M1.8 14 Q1 8 5 5.2 Q9 2.8 14 5 Q16.5 6 17.6 4.5 Q18 2 16 1.8 Q14.8 1.8 14.5 3 M17.8 4.5 Q17.5 7.5 14.5 10 L13.8 14.2 Q12.8 15 12 13.5 Q10.5 12 9 13.5 Q8 15 6.5 13.5 Q5 12 3.5 13.8 Q2.5 15 1.8 14 M4 6.5 Q5 10 7 9.5 Q8.5 9 9.5 8" fill="none" stroke="#CED0D6" stroke-width="1.2" stroke-linecap="round" stroke-linejoin="round"/><circle cx="12" cy="7" r="0.8" fill="#CED0D6"/></svg>
<svg style="left:1883px;top:165px" width="24" height="26" viewBox="0 0 24 26"><path d="M7 21.5H3.5V2H12.5V9" fill="none" stroke="#CED0D6" stroke-width="1.5" stroke-linecap="round" stroke-linejoin="round"/><path d="M6 4h2" stroke="#CED0D6" stroke-width="1.2"/><path d="M9.5 22 Q10 14.5 16 14.5 Q22 14.5 22.5 22 Z" fill="none" stroke="#CED0D6" stroke-width="1.5" stroke-linecap="round" stroke-linejoin="round"/><path d="M11.5 13L10.5 11.5M20.5 13L21.5 11.5" fill="none" stroke="#CED0D6" stroke-width="1.5" stroke-linecap="round" stroke-linejoin="round"/></svg>
<div class="a" style="left:1877px;top:207.5px;width:36px;height:37px;border-radius:7px;background:#3574F0"></div>
<svg style="left:1884px;top:214px" width="24" height="24" viewBox="0 0 24 24"><path d="M5 19.5H2.5V3H10V8" fill="none" stroke="#FFFFFF" stroke-width="1.6" stroke-linejoin="round"/><path d="M5 4.8h2" stroke="#fff" stroke-width="1.1"/><rect x="6.5" y="10" width="11.5" height="7" rx="1" fill="none" stroke="#fff" stroke-width="1.6"/><path d="M6 20H18.5" stroke="#fff" stroke-width="1.6"/><circle cx="19" cy="4.5" r="4" fill="#5FB86B"/></svg>
<svg style="left:1883px;top:264px" width="25" height="25" viewBox="0 0 22 22"><path d="M11 1 Q12.2 9.8 21 11 Q12.2 12.2 11 21 Q9.8 12.2 1 11 Q9.8 9.8 11 1Z" fill="#CED0D6"/></svg>
<div class="a" style="left:17.5px;top:1055px;width:10px;height:10px;border:1.5px solid #548AF7;border-radius:2.5px;background:#25324D"></div>
<div class="ht" style="left:33px;top:1049.81px;font-size:17.0px;color:#A9ADB5;">ProgramPengurutanAngka</div>
<svg style="left:245.5px;top:1053.5px" width="7" height="11" viewBox="0 0 7 11"><path d="M1.2 1L5.5 5.5L1.2 10" fill="none" stroke="#A9ADB5" stroke-width="1.3"/></svg>
<div class="a" style="left:265px;top:1055px;width:10px;height:10px;border:1.5px solid #548AF7;border-radius:2.5px;background:#25324D"></div>
<div class="ht" style="left:280px;top:1049.81px;font-size:17.0px;color:#A9ADB5;">app</div>
<svg style="left:321.5px;top:1053.5px" width="7" height="11" viewBox="0 0 7 11"><path d="M1.2 1L5.5 5.5L1.2 10" fill="none" stroke="#A9ADB5" stroke-width="1.3"/></svg>
<div class="ht" style="left:340px;top:1049.81px;font-size:17.0px;color:#A9ADB5;">src</div>
<svg style="left:376px;top:1053.5px" width="7" height="11" viewBox="0 0 7 11"><path d="M1.2 1L5.5 5.5L1.2 10" fill="none" stroke="#A9ADB5" stroke-width="1.3"/></svg>
<div class="a" style="left:395px;top:1055px;width:10px;height:10px;border:1.5px solid #548AF7;border-radius:2.5px;background:#25324D"></div>
<div class="ht" style="left:410px;top:1049.81px;font-size:17.0px;color:#A9ADB5;">main</div>
<svg style="left:459.5px;top:1053.5px" width="7" height="11" viewBox="0 0 7 11"><path d="M1.2 1L5.5 5.5L1.2 10" fill="none" stroke="#A9ADB5" stroke-width="1.3"/></svg>
<div class="ht" style="left:477.5px;top:1049.81px;font-size:17.0px;color:#A9ADB5;">java</div>
<svg style="left:520px;top:1053.5px" width="7" height="11" viewBox="0 0 7 11"><path d="M1.2 1L5.5 5.5L1.2 10" fill="none" stroke="#A9ADB5" stroke-width="1.3"/></svg>
<div class="ht" style="left:539px;top:1049.81px;font-size:17.0px;color:#A9ADB5;">com</div>
<svg style="left:584px;top:1053.5px" width="7" height="11" viewBox="0 0 7 11"><path d="M1.2 1L5.5 5.5L1.2 10" fill="none" stroke="#A9ADB5" stroke-width="1.3"/></svg>
<div class="ht" style="left:602.5px;top:1049.81px;font-size:17.0px;color:#A9ADB5;">example</div>
<svg style="left:678.5px;top:1053.5px" width="7" height="11" viewBox="0 0 7 11"><path d="M1.2 1L5.5 5.5L1.2 10" fill="none" stroke="#A9ADB5" stroke-width="1.3"/></svg>
<div class="ht" style="left:697.5px;top:1049.74px;font-size:17.2px;color:#A9ADB5;">programpengurutanangka</div>
<svg style="left:909.5px;top:1053.5px" width="7" height="11" viewBox="0 0 7 11"><path d="M1.2 1L5.5 5.5L1.2 10" fill="none" stroke="#A9ADB5" stroke-width="1.3"/></svg>
<svg style="left:929px;top:1051.5px" width="16" height="16" viewBox="0 0 16 16"><path d="M1.3 1.3 H14.5 L8 8 L14.5 14.7 H1.3 Z" fill="#2E2638" stroke="#A571E6" stroke-width="1.4" stroke-linejoin="round"/></svg>
<div class="ht" style="left:953px;top:1049.81px;font-size:17.0px;color:#A9ADB5;">MainActivity.kt</div>
<svg style="left:1079px;top:1053.5px" width="7" height="11" viewBox="0 0 7 11"><path d="M1.2 1L5.5 5.5L1.2 10" fill="none" stroke="#A9ADB5" stroke-width="1.3"/></svg>
<svg style="left:1098px;top:1050px" width="20" height="19" viewBox="0 0 20 19"><circle cx="8.5" cy="8.5" r="7" fill="#25324D" stroke="#548AF7" stroke-width="1.4"/><path d="M11 7.5 Q9.5 5.5 8 5.8 Q5 6.3 5 8.8 Q5 11.5 8 11.6 Q9.8 11.7 11 10" fill="none" stroke="#548AF7" stroke-width="1.3"/><path d="M11 11 H18.5 L15 14.5 L18.5 18 H11 Z" fill="#2E2638" stroke="#A571E6" stroke-width="1.2"/></svg>
<div class="ht" style="left:1123px;top:1049.81px;font-size:17.0px;color:#A9ADB5;">MainActivity</div>
<svg style="left:1229px;top:1053.5px" width="7" height="11" viewBox="0 0 7 11"><path d="M1.2 1L5.5 5.5L1.2 10" fill="none" stroke="#A9ADB5" stroke-width="1.3"/></svg>
<svg style="left:1248px;top:1050px" width="19" height="19" viewBox="0 0 19 19"><circle cx="9.5" cy="9.5" r="8" fill="#3D2526" stroke="#DB5C5C" stroke-width="1.4"/><path d="M5.5 13V7.5Q5.5 6.2 7 6.2Q9.5 6.2 9.5 8V13M9.5 8Q9.5 6.2 11.5 6.2Q13.5 6.2 13.5 8V13" fill="none" stroke="#DB5C5C" stroke-width="1.3"/></svg>
<div class="ht" style="left:1273.3px;top:1049.81px;font-size:17.0px;color:#A9ADB5;">onCreate</div>
<div class="ht" style="left:1572px;top:1049.81px;font-size:17.0px;color:#A9ADB5;">24:43</div>
<div class="ht" style="left:1635.5px;top:1049.81px;font-size:17.0px;color:#A9ADB5;">LF</div>
<div class="ht" style="left:1674px;top:1049.81px;font-size:17.0px;color:#A9ADB5;">UTF-8</div>
<svg style="left:1743px;top:1048px" width="22" height="22" viewBox="0 0 22 22"><path d="M8 4 Q9 11 16 12 Q9 13 8 20 Q7 13 0.5 12 Q7 11 8 4Z" fill="#CED0D6"/><circle cx="16" cy="5.5" r="4.2" fill="#2B2D30" stroke="#CED0D6" stroke-width="1.3"/><path d="M13.5 8L18.5 3" stroke="#CED0D6" stroke-width="1.2"/></svg>
<div class="ht" style="left:1788.5px;top:1049.77px;font-size:17.1px;color:#A9ADB5;">4 spaces</div>
<svg style="left:1880px;top:1050px" width="20" height="19" viewBox="0 0 20 19"><rect x="1.5" y="8" width="11" height="9" rx="1.5" fill="none" stroke="#CED0D6" stroke-width="1.5"/><path d="M9.5 8V5 Q9.5 2 13 2 Q16.5 2 16.5 5 V6.5" fill="none" stroke="#CED0D6" stroke-width="1.5"/><circle cx="7" cy="12.5" r="1" fill="#CED0D6"/></svg>
<!--STEND-->
</body></html>
